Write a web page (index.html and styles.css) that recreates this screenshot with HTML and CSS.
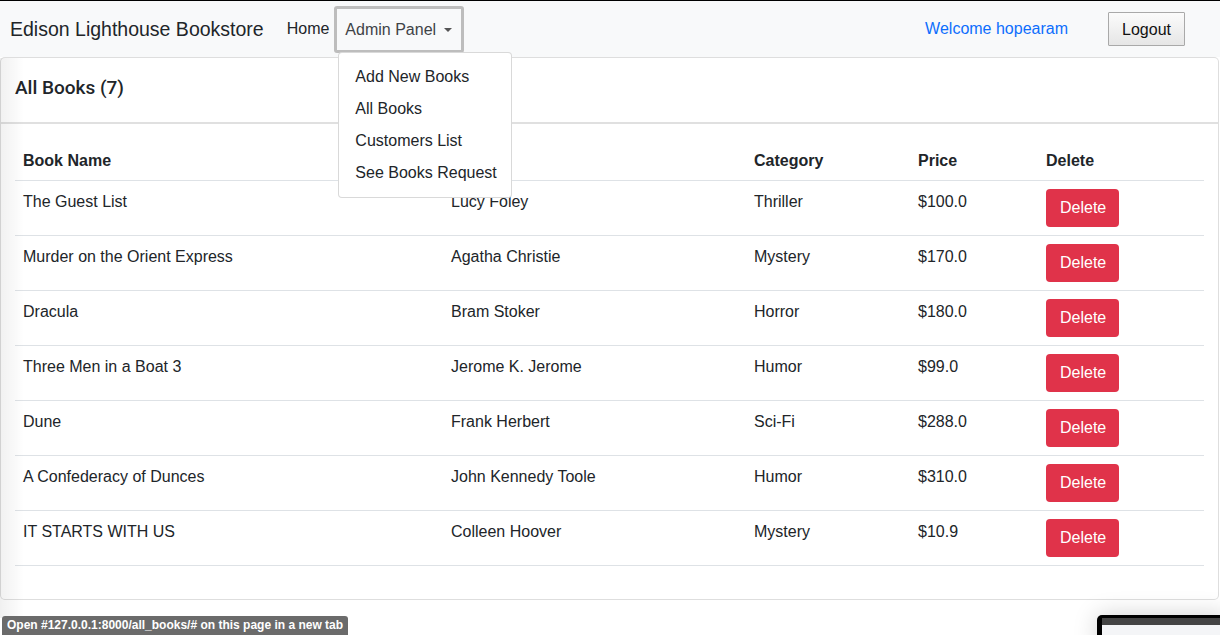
FILE: index.html
```html
<!DOCTYPE html>
<html lang="en">
<head>
<meta charset="utf-8">
<title>All Books</title>
<link rel="stylesheet" href="styles.css">
</head>
<body>
<nav class="navbar">
  <a class="brand" href="#">Edison Lighthouse Bookstore</a>
  <ul class="nav">
    <li><a class="nav-link home" href="#">Home</a></li>
    <li class="dropdown">
      <a class="nav-link toggle" href="#">Admin Panel <span class="caret"></span></a>
      <ul class="dropdown-menu">
        <li><a href="#">Add New Books</a></li>
        <li><a href="#">All Books</a></li>
        <li><a href="#">Customers List</a></li>
        <li><a href="#">See Books Request</a></li>
      </ul>
    </li>
  </ul>
  <div class="nav-right">
    <a class="welcome" href="#">Welcome hopearam</a>
    <button class="logout" type="button">Logout</button>
  </div>
</nav>

<main class="card">
  <div class="card-header"><h5>All Books (7)</h5></div>
  <div class="card-body">
    <table class="table">
      <colgroup>
        <col class="c1"><col class="c2"><col class="c3"><col class="c4"><col class="c5">
      </colgroup>
      <thead>
        <tr><th>Book Name</th><th>Author</th><th>Category</th><th>Price</th><th>Delete</th></tr>
      </thead>
      <tbody>
        <tr><td>The Guest List</td><td>Lucy Foley</td><td>Thriller</td><td>$100.0</td><td class="act"><a class="btn-danger" href="#">Delete</a></td></tr>
        <tr><td>Murder on the Orient Express</td><td>Agatha Christie</td><td>Mystery</td><td>$170.0</td><td class="act"><a class="btn-danger" href="#">Delete</a></td></tr>
        <tr><td>Dracula</td><td>Bram Stoker</td><td>Horror</td><td>$180.0</td><td class="act"><a class="btn-danger" href="#">Delete</a></td></tr>
        <tr><td>Three Men in a Boat 3</td><td>Jerome K. Jerome</td><td>Humor</td><td>$99.0</td><td class="act"><a class="btn-danger" href="#">Delete</a></td></tr>
        <tr><td>Dune</td><td>Frank Herbert</td><td>Sci-Fi</td><td>$288.0</td><td class="act"><a class="btn-danger" href="#">Delete</a></td></tr>
        <tr><td>A Confederacy of Dunces</td><td>John Kennedy Toole</td><td>Humor</td><td>$310.0</td><td class="act"><a class="btn-danger" href="#">Delete</a></td></tr>
        <tr><td>IT STARTS WITH US</td><td>Colleen Hoover</td><td>Mystery</td><td>$10.9</td><td class="act"><a class="btn-danger" href="#">Delete</a></td></tr>
      </tbody>
    </table>
  </div>
</main>

<div class="edge-shadow"></div>
<div class="status">Open #127.0.0.1:8000/all_books/# on this page in a new tab</div>
<div class="thumb">
  <div class="thumb-bar"></div>
  <div class="thumb-page"></div>
</div>
</body>
</html>
```

FILE: styles.css
```css
* { box-sizing: border-box; }
html, body { margin: 0; padding: 0; }
body {
  font-family: "Liberation Sans", Arial, sans-serif;
  font-size: 16px;
  line-height: 24px;
  color: #212529;
  background: #fff;
  border-top: 1px solid #000;
  position: relative;
  height: 635px;
  overflow: hidden;
}
a { text-decoration: none; }
ul { list-style: none; margin: 0; padding: 0; }

.navbar {
  height: 56px;
  background: #f8f9fa;
  display: flex;
  align-items: center;
  padding: 0 10px;
}
.brand {
  font-size: 19.5px;
  color: #212529;
  line-height: 30px;
  margin-right: 22px;
}
.nav { display: flex; align-items: center; }
.nav-link { display: block; color: #212529; }
.home { padding: 8px 5px 8px 1px; }
.dropdown { position: relative; }
.toggle {
  color: #3f4347;
  border: 3px solid #bdbdbd;
  border-radius: 3px;
  height: 47px;
  padding: 9px 9px 0 8px;
  display: flex;
  align-items: flex-start;
  gap: 8px;
}
.caret {
  display: inline-block;
  width: 0; height: 0;
  border-left: 4px solid transparent;
  border-right: 4px solid transparent;
  border-top: 4px solid #555;
  margin-top: 10px;
}
.dropdown-menu {
  position: absolute;
  top: 46px;
  left: 4px;
  width: 174px;
  background: #fff;
  border: 1px solid rgba(0,0,0,.15);
  border-radius: 4px;
  padding: 8px 0;
  z-index: 10;
}
.dropdown-menu a {
  display: block;
  padding: 4px 16px;
  color: #212529;
  white-space: nowrap;
}

.nav-right {
  margin-left: auto;
  display: flex;
  align-items: center;
  padding-right: 25px;
}
.welcome { color: #0d6efd; margin-right: 40px; }
.logout {
  font-family: inherit;
  font-size: 16px;
  color: #111;
  height: 34px;
  width: 77px;
  border: 1px solid #a9a9a9;
  border-radius: 1px;
  background: linear-gradient(#fbfbfb, #e6e6e6);
  padding: 1px 0 0;
}

.card {
  margin: 0 1px 0 0;
  border: 1px solid rgba(0,0,0,.13);
  border-radius: 5px;
  background: #fff;
}
.card-header {
  height: 66px;
  display: flex;
  align-items: center;
  padding: 0 14px;
  border-bottom: 2px solid rgba(0,0,0,.12);
}
.card-header h5 {
  margin: 0;
  font-family: Roboto, "Liberation Sans", sans-serif;
  font-size: 19px;
  font-weight: 500;
  line-height: 24px;
  padding-bottom: 5px;
}
.card-body { padding: 16px 14px 33px; }

.table { width: 100%; border-collapse: collapse; }
.c1 { width: 428px; }
.c2 { width: 303px; }
.c3 { width: 164px; }
.c4 { width: 128px; }
.table th, .table td {
  text-align: left;
  vertical-align: top;
  padding: 9px 8px 7px;
  border-bottom: 1px solid #dee2e6;
}
.table th { font-weight: 700; }
.table td { height: 55px; }
.table td.act { padding: 8px 8px 8px; }
.btn-danger {
  display: inline-block;
  background: #e0334a;
  color: #fff;
  padding: 7px 13px 7px 14px;
  border-radius: 4px;
  line-height: 24px;
}

.edge-shadow {
  position: absolute;
  left: 0; top: 57px;
  width: 24px; height: 560px;
  background: linear-gradient(to right, rgba(0,0,0,.06), rgba(0,0,0,0));
  pointer-events: none;
}
.status {
  position: absolute;
  left: 2px; bottom: 0;
  height: 19px;
  padding: 0 5px;
  background: #6b6b6b;
  color: #fff;
  font-size: 12px;
  font-weight: 700;
  line-height: 19px;
  border-radius: 3px 3px 0 0;
  white-space: nowrap;
}
.thumb {
  position: absolute;
  left: 1097px; top: 614px;
  width: 130px; height: 30px;
  background: #000;
  border-radius: 5px 0 0 0;
  padding: 3px 0 0 5px;
  box-shadow: 0 0 24px rgba(0,0,0,.18);
}
.thumb-bar { height: 7px; background: #444; }
.thumb-page { height: 20px; background: #f4f5f7; }
```
